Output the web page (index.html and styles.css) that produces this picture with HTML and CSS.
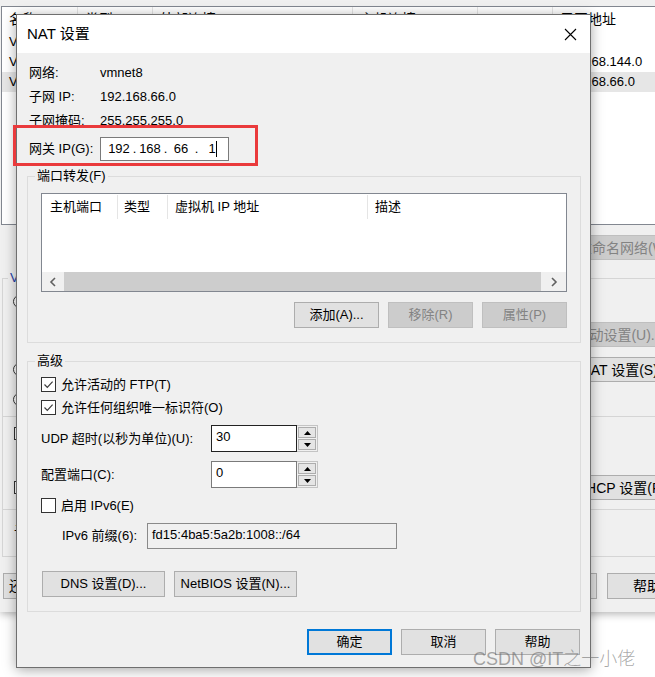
FILE: index.html
```html
<!DOCTYPE html>
<html lang="zh-CN">
<head>
    <meta charset="UTF-8">
    <meta name="viewport" content="width=device-width, initial-scale=1.0">
    <title>NAT 设置</title>
    <link rel="stylesheet" href="styles.css">
</head>
<body>
<div class="desktop">

    <!-- Fenêtre d'arrière-plan : éditeur de réseau virtuel (presque entièrement cachée) -->
    <div class="bgwin">
        <div class="bg-list">
            <div class="bg-head">
                <span class="c1">名称</span><span class="c2">类型</span><span class="c3">外部连接</span><span class="c4">主机连接</span><span class="c5">DHCP</span><span class="c6">子网地址</span>
            </div>
            <div class="bg-row">
                <span class="c1">VMnet0</span><span class="c2"></span><span class="c3"></span><span class="c4"></span><span class="c5"></span><span class="c6"></span>
            </div>
            <div class="bg-row">
                <span class="c1">VMnet1</span><span class="c2"></span><span class="c3"></span><span class="c4"></span><span class="c5"></span><span class="c6">192.168.144.0</span>
            </div>
            <div class="bg-row sel">
                <span class="c1">VMnet8</span><span class="c2"></span><span class="c3"></span><span class="c4"></span><span class="c5"></span><span class="c6">192.168.66.0</span>
            </div>
        </div>

        <div class="bg-bar">
            <button class="bg-btn" disabled>重命名网络(W)...</button>
        </div>

        <fieldset class="bg-grp">
            <legend>VMnet 信息</legend>
            <div class="bg-r r1">
                <span class="radio"></span>
            </div>
            <div class="bg-r r2">
                <span></span>
                <button class="bg-btn" disabled>自动设置(U)...</button>
            </div>
            <div class="bg-r r3">
                <span><span class="radio"></span></span>
                <button class="bg-btn">NAT 设置(S)...</button>
            </div>
            <div class="bg-r r4">
                <span class="radio"></span>
            </div>
            <div class="bg-sep s1"></div>
            <div class="bg-r r5">
                <span class="box"></span>
            </div>
            <div class="bg-r r6">
                <span><span class="box"></span></span>
                <button class="bg-btn">DHCP 设置(P)...</button>
            </div>
            <div class="bg-sep s2"></div>
            <div class="bg-r r7">
                <span class="indent2">子网</span>
            </div>
        </fieldset>

        <div class="bg-foot">
            <button class="bg-btn wide">还原</button>
            <button class="bg-btn small push"></button>
            <button class="bg-btn small">帮助</button>
        </div>
    </div>

    <!-- Boîte de dialogue NAT -->
    <div class="dialog">
        <div class="titlebar">
            <span>NAT 设置</span>
            <svg class="close" width="13" height="13" viewBox="0 0 13 13"><path d="M1 1L12 12M12 1L1 12" stroke="#000" stroke-width="1.1" fill="none"/></svg>
        </div>

        <div class="dlg-body">
            <div class="info-row"><span class="lbl">网络:</span><span>vmnet8</span></div>
            <div class="info-row"><span class="lbl">子网 IP:</span><span>192.168.66.0</span></div>
            <div class="info-row"><span class="lbl">子网掩码:</span><span>255.255.255.0</span></div>
            <div class="info-row gw">
                <span class="lbl">网关 IP(G):</span>
                <div class="ipbox">
                    <span class="oct">192</span><span class="dot">.</span>
                    <span class="oct">168</span><span class="dot">.</span>
                    <span class="oct">66</span><span class="dot">.</span>
                    <span class="oct">1<span class="caret"></span></span>
                </div>
            </div>

            <fieldset class="grp">
                <legend>端口转发(F)</legend>
                <div class="lv">
                    <div class="lv-head">
                        <span class="h1">主机端口</span><span class="h2">类型</span><span class="h3">虚拟机 IP 地址</span><span class="h4">描述</span>
                    </div>
                    <div class="lv-fill"></div>
                    <div class="hscroll">
                        <span class="arrow"><svg width="8" height="10" viewBox="0 0 8 10"><path d="M6 1L2 5L6 9" fill="none" stroke="#606060" stroke-width="1.6"/></svg></span>
                        <span class="thumb"></span>
                        <span class="arrow right"><svg width="8" height="10" viewBox="0 0 8 10"><path d="M2 1L6 5L2 9" fill="none" stroke="#606060" stroke-width="1.6"/></svg></span>
                    </div>
                </div>
                <div class="btn-row">
                    <button class="btn">添加(A)...</button>
                    <button class="btn" disabled>移除(R)</button>
                    <button class="btn" disabled>属性(P)</button>
                </div>
            </fieldset>

            <fieldset class="grp adv">
                <legend>高级</legend>
                <div class="chk-row">
                    <span class="chk"><svg width="13" height="13" viewBox="0 0 13 13"><path d="M2.5 6.5L5.3 9.3L10.6 3.6" fill="none" stroke="#3c3c3c" stroke-width="1.2"/></svg></span>
                    <span>允许活动的 FTP(T)</span>
                </div>
                <div class="chk-row">
                    <span class="chk"><svg width="13" height="13" viewBox="0 0 13 13"><path d="M2.5 6.5L5.3 9.3L10.6 3.6" fill="none" stroke="#3c3c3c" stroke-width="1.2"/></svg></span>
                    <span>允许任何组织唯一标识符(O)</span>
                </div>
                <div class="spin-row udp">
                    <span class="lbl">UDP 超时(以秒为单位)(U):</span>
                    <div class="spin">
                        <div class="spin-input focus">30</div>
                        <div class="spin-btns">
                            <span><svg width="7" height="4" viewBox="0 0 7 4"><path d="M0 4H7L3.5 0Z"/></svg></span>
                            <span><svg width="7" height="4" viewBox="0 0 7 4"><path d="M0 0H7L3.5 4Z"/></svg></span>
                        </div>
                    </div>
                </div>
                <div class="spin-row cfg">
                    <span class="lbl">配置端口(C):</span>
                    <div class="spin">
                        <div class="spin-input">0</div>
                        <div class="spin-btns">
                            <span><svg width="7" height="4" viewBox="0 0 7 4"><path d="M0 4H7L3.5 0Z"/></svg></span>
                            <span><svg width="7" height="4" viewBox="0 0 7 4"><path d="M0 0H7L3.5 4Z"/></svg></span>
                        </div>
                    </div>
                </div>
                <div class="chk-row v6">
                    <span class="chk"></span>
                    <span>启用 IPv6(E)</span>
                </div>
                <div class="prefix-row">
                    <span class="lbl">IPv6 前缀(6):</span>
                    <div class="prefix">fd15:4ba5:5a2b:1008::/64</div>
                </div>
                <div class="adv-btns">
                    <button class="btn big">DNS 设置(D)...</button>
                    <button class="btn big">NetBIOS 设置(N)...</button>
                </div>
            </fieldset>

            <div class="dlg-foot">
                <button class="btn default">确定</button>
                <button class="btn">取消</button>
                <button class="btn">帮助</button>
            </div>
        </div>
    </div>

    <!-- Annotations par-dessus la capture -->
    <div class="mark"></div>
    <div class="wm">CSDN @IT之一小佬</div>
</div>
</body>
</html>
```

FILE: styles.css
```css
body {
    margin: 0;
    background: #fff;
    font-family: "Liberation Sans", "Noto Sans CJK SC", sans-serif;
    font-size: 13px;
    line-height: 16px;
    color: #000;
}

button {
    font: inherit;
    color: inherit;
    padding: 0;
    margin: 0;
}

.desktop {
    position: relative;
    width: 655px;
    height: 677px;
    overflow: hidden;
}

/* Fenêtre d'arrière-plan */
.bgwin {
    position: absolute;
    left: 0;
    top: 0;
    width: 700px;
    height: 612px;
    background: #f0f0f0;
    box-shadow: 0 2px 8px rgba(0, 0, 0, 0.3);
}

.bg-list {
    margin: 6px 0 0 1px;
    height: 219px;
    box-sizing: border-box;
    border: 1px solid #828790;
    background: #fff;
    overflow: hidden;
}

.bg-head,
.bg-row {
    display: flex;
    white-space: nowrap;
}

.bg-head {
    height: 25px;
    line-height: 25px;
    font-size: 14px;
}

.bg-row {
    height: 20px;
    line-height: 20px;
}

.bg-row.sel {
    background: #e6e6e6;
}

.bg-head span,
.bg-row span {
    box-sizing: border-box;
    padding-left: 7px;
    overflow: hidden;
    border-right: 1px solid transparent;
}

.bg-head span {
    border-right-color: #e5e5e5;
}

.bg-row .c6 {
    padding-left: 6px;
}

.c1 { width: 76px; }
.c2 { width: 75px; }
.c3 { width: 200px; }
.c4 { width: 125px; }
.c5 { width: 75px; }
.c6 { width: 140px; }

.bg-btn {
    width: 100px;
    height: 25px;
    box-sizing: border-box;
    border: 1px solid #adadad;
    background: #e1e1e1;
    white-space: nowrap;
    font-size: 14px;
    overflow: visible;
}

.bg-btn:disabled {
    background: #cccccc;
    border-color: #bfbfbf;
    color: #838383;
}

.bg-bar {
    margin-top: 10px;
    padding-left: 577px;
    height: 25px;
}

.bg-grp {
    margin: 10px 10px 0 2px;
    padding: 0 0 17px 0;
    border: 1px solid #d5d5d5;
    min-width: 0;
}

.bg-grp legend {
    margin-left: 5px;
    padding: 0 2px;
    color: #1f3fa8;
    line-height: 16px;
}

.bg-r {
    display: grid;
    grid-template-columns: 571px 100px;
    align-items: center;
    white-space: nowrap;
}

.bg-r > span {
    display: flex;
    align-items: center;
}

.bg-r.r1,
.bg-r.r4,
.bg-r.r5 {
    display: flex;
    align-items: center;
    padding-left: 10px;
}

.bg-r.r5 {
    padding-left: 11px;
}

.r1 { margin-top: 7px; height: 16px; }
.r2 { margin-top: 13px; height: 25px; }
.r3 { margin-top: 10px; height: 25px; }
.r4 { margin-top: 9px; height: 16px; }
.r5 { margin-top: 9px; height: 14px; }
.r6 { margin-top: 35px; height: 24px; }
.r7 { margin-top: 13px; height: 16px; }

.r2 .bg-btn { margin-left: -5px; }
.r3 .bg-btn { margin-left: 1px; }
.r6 .bg-btn { margin-left: 1px; }

.r3 > span { padding-left: 10px; }
.r6 > span { padding-left: 11px; }

.indent2 { padding-left: 11px; }

.bg-sep {
    height: 1px;
    background: #d5d5d5;
}

.s1 { margin-top: 9px; }
.s2 { margin-top: 10px; }

.radio {
    width: 13px;
    height: 13px;
    box-sizing: border-box;
    border: 1px solid #333;
    border-radius: 50%;
    background: #fff;
    flex: none;
}

.box {
    width: 13px;
    height: 13px;
    box-sizing: border-box;
    border: 1px solid #333;
    background: #fff;
    flex: none;
}

.bg-foot {
    display: flex;
    gap: 10px;
    margin-top: 16px;
    padding: 0 13px 0 3px;
}

.bg-btn.wide {
    width: 110px;
    height: 26px;
    text-align: left;
    padding-left: 5px;
}

.bg-btn.small {
    width: 80px;
    height: 26px;
}

.bg-btn.push {
    margin-left: auto;
}

/* Boîte de dialogue */
.dialog {
    position: absolute;
    left: 16px;
    top: 14px;
    width: 575px;
    box-sizing: border-box;
    border: 1px solid #6f6f6f;
    background: #f0f0f0;
    box-shadow: 0 2px 12px rgba(0, 0, 0, 0.35);
}

.titlebar {
    height: 38px;
    background: #fff;
    display: flex;
    align-items: center;
    justify-content: space-between;
    padding: 0 13px 0 10px;
    font-size: 15px;
}

.dlg-body {
    padding: 8px 9px 12px 10px;
}

.info-row {
    display: flex;
    align-items: center;
    height: 24px;
    padding-left: 2px;
}

.info-row .lbl {
    width: 71px;
}

.info-row.gw {
    margin-top: 4px;
}

.ipbox {
    width: 129px;
    height: 24px;
    box-sizing: border-box;
    border: 1px solid #7a7a7a;
    background: #fff;
    display: flex;
    align-items: center;
    padding-left: 5px;
}

.oct {
    width: 26px;
    text-align: center;
    position: relative;
}

.dot {
    width: 5px;
    text-align: center;
}

.caret {
    position: absolute;
    top: 0;
    width: 1px;
    height: 16px;
    background: #000;
}

/* Groupes */
.grp {
    margin: 7px 0 0;
    padding: 9px 13px 14px;
    border: 1px solid #dcdcdc;
    min-width: 0;
}

.grp legend {
    margin-left: -6px;
    padding: 0 2px;
    line-height: 16px;
}

.grp.adv {
    margin-top: 10px;
    padding-top: 4px;
}

.lv {
    height: 99px;
    box-sizing: border-box;
    border: 1px solid #828790;
    background: #fff;
    display: flex;
    flex-direction: column;
}

.lv-head {
    display: flex;
    height: 25px;
    align-items: center;
    white-space: nowrap;
}

.lv-head span {
    box-sizing: border-box;
    padding-left: 7px;
    line-height: 24px;
    border-right: 1px solid #e5e5e5;
}

.lv-head .h1 { width: 76px; padding-left: 8px; }
.lv-head .h2 { width: 50px; padding-left: 6px; }
.lv-head .h3 { width: 200px; }
.lv-head .h4 { flex: 1; border-right: 0; }

.lv-fill {
    flex: 1;
}

.hscroll {
    display: flex;
    height: 19px;
    background: #f0f0f0;
}

.arrow {
    width: 22px;
    display: flex;
    align-items: center;
    justify-content: center;
}

.arrow.right {
    width: 25px;
}

.thumb {
    flex: 1;
    background: #cdcdcd;
}

.btn-row {
    display: flex;
    justify-content: flex-end;
    gap: 9px;
    margin-top: 10px;
}

.btn {
    width: 85px;
    height: 26px;
    box-sizing: border-box;
    border: 1px solid #adadad;
    background: #e1e1e1;
    white-space: nowrap;
}

.btn:disabled {
    background: #cccccc;
    border-color: #bfbfbf;
    color: #838383;
}

.btn.default {
    border: 2px solid #0078d7;
}

.btn.big {
    width: 123px;
}

/* Section avancée */
.chk-row {
    display: flex;
    align-items: center;
    height: 23px;
    gap: 5px;
}

.chk {
    width: 15px;
    height: 15px;
    box-sizing: border-box;
    border: 1px solid #333;
    background: #fff;
    display: flex;
    align-items: center;
    justify-content: center;
}

.spin-row {
    display: flex;
    align-items: center;
    height: 27px;
}

.spin-row.udp { margin-top: 6px; }
.spin-row.cfg { margin-top: 9px; }
.chk-row.v6 { margin-top: 6px; }

.spin-row .lbl {
    width: 170px;
}

.spin {
    display: flex;
}

.spin-input {
    width: 86px;
    height: 27px;
    box-sizing: border-box;
    border: 1px solid #7a7a7a;
    background: #fff;
    padding: 3px 0 0 4px;
}

.spin-input.focus {
    border-color: #222;
}

.spin-btns {
    width: 21px;
    height: 27px;
    box-sizing: border-box;
    border: 1px solid #c4c4c4;
    border-left: 0;
    padding: 1px;
    display: flex;
    flex-direction: column;
    gap: 1px;
}

.spin-btns span {
    flex: 1;
    box-sizing: border-box;
    border: 1px solid #adadad;
    background: #e5e5e5;
    display: flex;
    align-items: center;
    justify-content: center;
}

.prefix-row {
    display: flex;
    align-items: center;
    height: 26px;
    margin-top: 6px;
    padding-left: 21px;
}

.prefix-row .lbl {
    width: 85px;
}

.prefix {
    width: 250px;
    height: 26px;
    box-sizing: border-box;
    border: 1px solid #8a8a8a;
    background: #f0f0f0;
    padding: 3px 0 0 4px;
}

.adv-btns {
    display: flex;
    gap: 9px;
    margin: 22px 0 0 1px;
}

.dlg-foot {
    display: flex;
    justify-content: flex-end;
    gap: 9px;
    margin: 17px 1px 0 0;
}

/* Annotations */
.mark {
    position: absolute;
    left: 13px;
    top: 125px;
    width: 245px;
    height: 41px;
    box-sizing: border-box;
    border: 3px solid #ea3a3c;
}

.wm {
    position: absolute;
    left: 473px;
    top: 648px;
    font-size: 18px;
    line-height: 22px;
    font-weight: 300;
    color: rgba(110, 110, 110, 0.6);
    white-space: nowrap;
}
```
